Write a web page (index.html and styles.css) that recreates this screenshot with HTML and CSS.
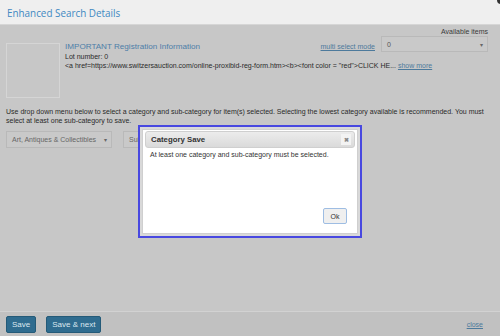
FILE: index.html
```html
<!DOCTYPE html>
<html>
<head>
<meta charset="utf-8">
<link rel="stylesheet" href="styles.css">
</head>
<body>
<div class="dlg">
  <div class="hdr">
    <span class="title">Enhanced Search Details</span>
    <span class="corner"></span>
  </div>
  <div class="main">
    <div class="avail-label">Available items</div>
    <div class="lot-row">
      <div class="thumb"></div>
      <div class="info">
        <div class="info-head">
          <span class="info-title">IMPORTANT Registration Information</span>
          <a class="lnk multi">multi select mode</a>
          <div class="sel sel-avail"><span>0</span><span class="caret">▾</span></div>
        </div>
        <div class="line">Lot number: 0</div>
        <div class="line">&lt;a href=https://www.switzersauction.com/online-proxibid-reg-form.htm&gt;&lt;b&gt;&lt;font color = "red"&gt;CLICK HE... <a class="lnk">show more</a></div>
      </div>
    </div>
    <p class="help">Use drop down menu below to select a category and sub-category for item(s) selected. Selecting the lowest category available is recommended. You must select at least one sub-category to save.</p>
    <div class="cat-row">
      <div class="sel sel-cat"><span>Art, Antiques &amp; Collectibles</span><span class="caret">▾</span></div>
      <div class="sel sel-sub"><span>Sub</span><span class="caret">▾</span></div>
    </div>
  </div>
  <div class="foot">
    <button class="btn">Save</button>
    <button class="btn">Save &amp; next</button>
    <a class="lnk close">close</a>
  </div>

  <div class="popup">
    <div class="popup-inner">
      <div class="popup-hdr">
        <span>Category Save</span>
        <span class="px">&#x2716;</span>
      </div>
      <div class="popup-body">At least one category and sub-category must be selected.</div>
      <div class="popup-foot"><button class="ok">Ok</button></div>
    </div>
  </div>
</div>
</body>
</html>
```

FILE: styles.css
```css
html, body {
  margin: 0;
  padding: 0;
}
body {
  width: 500px;
  height: 336px;
  overflow: hidden;
  font-family: "Liberation Sans", Arial, sans-serif;
  font-size: 7px;
  color: #2a2a2a;
  background: #c7c7c7;
}
.dlg {
  position: relative;
  width: 500px;
  height: 336px;
  display: flex;
  flex-direction: column;
  background: #c7c7c7;
}
.hdr {
  height: 25px;
  background: #efefef;
  border-bottom: 1px solid #d6d6d6;
  box-sizing: border-box;
  display: flex;
  align-items: center;
  padding: 2px 0 0 7px;
  position: relative;
}
.title {
  font-family: "Open Sans", sans-serif;
  font-size: 9.9px;
  color: #4189c2;
}
.corner {
  position: absolute;
  right: -5px;
  top: -4px;
  width: 8px;
  height: 8px;
  border-radius: 50%;
  background: #333;
}
.main {
  flex: 1;
  padding: 2px 12px 0 6px;
}
.avail-label {
  text-align: right;
  line-height: 9px;
  height: 9px;
  color: #3a3a3a;
}
.lot-row {
  display: flex;
}
.thumb {
  width: 54px;
  height: 55px;
  margin-top: 7px;
  border: 1px solid #d5d5d5;
  box-sizing: border-box;
  margin-right: 5px;
  flex: none;
}
.info {
  flex: 1;
}
.info-head {
  display: flex;
  align-items: flex-end;
  height: 16px;
}
.info-title {
  font-size: 8.1px;
  color: #4d7ea8;
  flex: 1;
  line-height: 10px;
}
.lnk {
  color: #4d7a9c;
  text-decoration: underline;
}
.multi {
  line-height: 10px;
  margin-right: 6px;
}
.sel {
  box-sizing: border-box;
  border: 1px solid #b9b9b9;
  background: #c9c9c9;
  display: flex;
  align-items: center;
  justify-content: space-between;
  padding: 0 4px 0 5px;
  color: #555;
}
.sel-avail {
  width: 107px;
  height: 16px;
}
.caret {
  font-size: 6px;
  color: #666;
}
.line {
  line-height: 9px;
}
.help {
  margin: 9px 0 0;
  line-height: 9px;
}
.cat-row {
  display: flex;
  gap: 11px;
  margin-top: 6px;
}
.sel-cat {
  width: 106px;
  height: 17px;
  color: #666;
}
.sel-sub {
  width: 106px;
  height: 17px;
  color: #666;
}
.foot {
  height: 25px;
  box-sizing: border-box;
  border-top: 1px solid #d2d2d2;
  background: #c1c1c1;
  display: flex;
  align-items: center;
  padding: 1px 17px 0 6px;
}
.btn {
  font-family: "Liberation Sans", Arial, sans-serif;
  font-size: 8px;
  color: #dce8f0;
  background: #2f6c8f;
  border: 1px solid #245a78;
  border-radius: 2px;
  height: 17px;
  padding: 0 5px;
  margin-right: 10px;
}
.close {
  margin-left: auto;
}
.popup {
  position: absolute;
  left: 138px;
  top: 125px;
  width: 224px;
  height: 113px;
  box-sizing: border-box;
  border: 2px solid #4848e0;
  background: #d9d9d9;
  padding: 2px;
}
.popup-inner {
  background: #fff;
  height: 100%;
  box-sizing: border-box;
  border: 1px solid #cfcfcf;
  padding: 1px 2px 2px;
  display: flex;
  flex-direction: column;
}
.popup-hdr {
  height: 17px;
  box-sizing: border-box;
  border: 1px solid #cfcfcf;
  border-radius: 3px;
  background: linear-gradient(#ececec, #dadada);
  display: flex;
  align-items: center;
  justify-content: space-between;
  padding: 0 3px 0 5px;
  font-weight: bold;
  font-size: 7.8px;
  color: #333;
}
.px {
  width: 10px;
  height: 11px;
  background: #f3f3f3;
  font-size: 6px;
  color: #888;
  display: flex;
  align-items: center;
  justify-content: center;
}
.popup-body {
  padding: 2px 5px;
  line-height: 9px;
  color: #333;
  flex: 1;
}
.popup-foot {
  display: flex;
  justify-content: flex-end;
  padding: 0 8px 7px;
}
.ok {
  font-family: "Liberation Sans", Arial, sans-serif;
  font-size: 7px;
  color: #333;
  width: 24px;
  height: 16px;
  background: #efefef;
  border: 1px solid #9ebde3;
  border-radius: 2px;
  padding: 0;
}
```
